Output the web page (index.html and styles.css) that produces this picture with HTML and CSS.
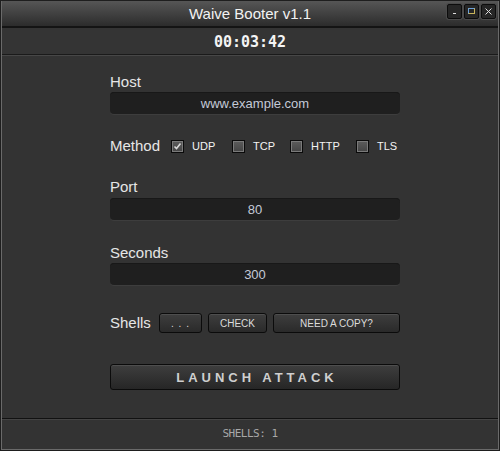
FILE: index.html
```html
<!DOCTYPE html>
<html>
<head>
<meta charset="utf-8">
<link rel="stylesheet" href="styles.css">
</head>
<body>
<div class="window">
  <div class="titlebar">
    <span class="title">Waive Booter v1.1</span>
    <div class="winbtns">
      <span class="wbtn"><svg width="13" height="13" viewBox="0 0 13 13"><rect x="5" y="8" width="3" height="1" fill="#ddd"/></svg></span>
      <span class="wbtn"><svg width="13" height="13" viewBox="0 0 13 13"><rect x="3.5" y="3.5" width="6" height="5" fill="none" stroke="#c8b45a"/><path d="M3.5 3.5H9.5" stroke="#6aa0d8"/><path d="M3.5 3.5V8.5" stroke="#6aa0d8"/></svg></span>
      <span class="wbtn"><svg width="13" height="13" viewBox="0 0 13 13"><path d="M3.5 3.5L9.5 9.5M9.5 3.5L3.5 9.5" stroke="#ddd" stroke-width="1"/></svg></span>
    </div>
  </div>
  <div class="timer">00:03:42</div>
  <div class="main">
    <div class="form">
      <div class="label">Host</div>
      <div class="input host-input">www.example.com</div>

      <div class="method-row">
        <span class="label method-label">Method</span>
        <span class="option opt-udp"><span class="check checked"><svg width="11" height="11" viewBox="0 0 11 11"><path d="M2.5 5.5L4.5 7.5L8.5 2.5" fill="none" stroke="#d8d8d8" stroke-width="1.6"/></svg></span><span class="opt">UDP</span></span>
        <span class="option opt-tcp"><span class="check"></span><span class="opt">TCP</span></span>
        <span class="option opt-http"><span class="check"></span><span class="opt">HTTP</span></span>
        <span class="option opt-tls"><span class="check"></span><span class="opt">TLS</span></span>
      </div>

      <div class="label port-label">Port</div>
      <div class="input port-input">80</div>

      <div class="label sec-label">Seconds</div>
      <div class="input sec-input">300</div>

      <div class="shells-row">
        <span class="label shells-label">Shells</span>
        <span class="btn btn-dots">. . .</span>
        <span class="btn btn-check">CHECK</span>
        <span class="btn btn-copy">NEED A COPY?</span>
      </div>

      <div class="launch">LAUNCH ATTACK</div>
    </div>
  </div>
  <div class="footer">SHELLS: 1</div>
</div>
</body>
</html>
```

FILE: styles.css
```css
html, body {
  margin: 0;
  padding: 0;
  background: #333333;
}
.window {
  width: 500px;
  height: 451px;
  box-sizing: border-box;
  border: 1px solid #1e1e1e;
  box-shadow: inset 0 0 0 1px #6a6a6a;
  background: #333333;
  display: flex;
  flex-direction: column;
  font-family: "Liberation Sans", Arial, sans-serif;
  color: #e8e8e8;
}
.titlebar {
  height: 25px;
  border-bottom: 2px solid #141414;
  background: linear-gradient(#565656, #2c2c2c);
  margin: 0 1px;
  display: flex;
  align-items: center;
  justify-content: center;
  position: relative;
}
.title {
  font-size: 15px;
  color: #f2f2f2;
  line-height: 16px;
  margin-top: 1px;
}
.winbtns {
  position: absolute;
  right: 2px;
  top: 3px;
  display: flex;
  gap: 2px;
}
.wbtn {
  width: 13px;
  height: 13px;
  background: #262626;
  border: 1px solid #0c0c0c;
  border-radius: 2px;
  box-shadow: 0 0 0 1px #4a4a4a;
  display: flex;
}
.timer {
  height: 27px;
  margin: 0 1px;
  border-bottom: 1px solid #1a1a1a;
  background: #343434;
  display: flex;
  align-items: center;
  justify-content: center;
  font-family: "DejaVu Sans Mono", monospace;
  font-weight: bold;
  font-size: 15px;
  color: #f4f4f4;
  padding-top: 1px;
  box-sizing: border-box;
}
.main {
  flex: 1;
  margin: 0 1px;
  border-top: 1px solid #474747;
  padding: 18px 0 0 108px;
}
.form {
  width: 290px;
  display: flex;
  flex-direction: column;
}
.label {
  font-size: 15px;
  line-height: 16px;
  color: #e6e6e6;
}
.input {
  height: 22px;
  margin-top: 2px;
  background: #1f1f1f;
  border-radius: 4px;
  box-shadow: 0 1px 0 #3d3d3d, inset 0 1px 0 #181818;
  display: flex;
  align-items: center;
  justify-content: center;
  font-size: 13px;
  color: #c4cad8;
}
.method-row {
  margin-top: 23px;
  height: 18px;
  display: flex;
  align-items: center;
}
.method-label {
  width: 61px;
  flex-shrink: 0;
}
.option {
  display: flex;
  align-items: center;
  flex-shrink: 0;
}
.opt-udp { width: 61px; }
.opt-tcp { width: 58px; }
.opt-http { width: 66px; }
.opt-tls { width: 44px; }
.check {
  width: 11px;
  height: 11px;
  flex-shrink: 0;
  border: 1px solid #0a0a0a;
  box-shadow: inset 0 0 0 1px #7a7a7a;
  background: linear-gradient(#5c5c5c, #444444);
  display: flex;
  align-items: center;
  justify-content: center;
}
.opt {
  font-size: 11px;
  color: #f4f4f4;
  margin-left: 8px;
}
.port-label { margin-top: 24px; }
.port-input { margin-top: 3px; }
.sec-label { margin-top: 25px; }
.sec-input { margin-top: 2px; }
.shells-row {
  margin-top: 28px;
  height: 20px;
  display: flex;
  align-items: center;
  gap: 6px;
}
.shells-label {
  width: 43px;
}
.btn {
  height: 20px;
  box-sizing: border-box;
  border: 1px solid #0b0b0b;
  border-radius: 3px;
  background: linear-gradient(#3e3e3e, #2a2a2a);
  box-shadow: inset 0 1px 0 #4e4e4e;
  display: flex;
  align-items: center;
  justify-content: center;
  font-size: 10px;
  color: #dcdcdc;
}
.btn-dots { width: 43px; letter-spacing: 1px; }
.btn-check { width: 59px; }
.btn-copy { width: 127px; }
.launch {
  margin-top: 31px;
  height: 26px;
  box-sizing: border-box;
  border: 1px solid #0b0b0b;
  border-radius: 3px;
  background: linear-gradient(#3e3e3e, #262626);
  box-shadow: inset 0 1px 0 #4e4e4e;
  display: flex;
  align-items: center;
  justify-content: center;
  font-size: 13px;
  font-weight: bold;
  letter-spacing: 4px;
  padding-left: 4px;
  color: #cfcfcf;
}
.footer {
  height: 32px;
  margin: 0 1px;
  box-sizing: border-box;
  border-top: 1px solid #111111;
  box-shadow: inset 0 1px 0 #444444;
  display: flex;
  align-items: center;
  justify-content: center;
  font-family: "DejaVu Sans Mono", monospace;
  font-size: 11px;
  letter-spacing: -0.5px;
  color: #a8a8a8;
  padding-bottom: 2px;
}
```
